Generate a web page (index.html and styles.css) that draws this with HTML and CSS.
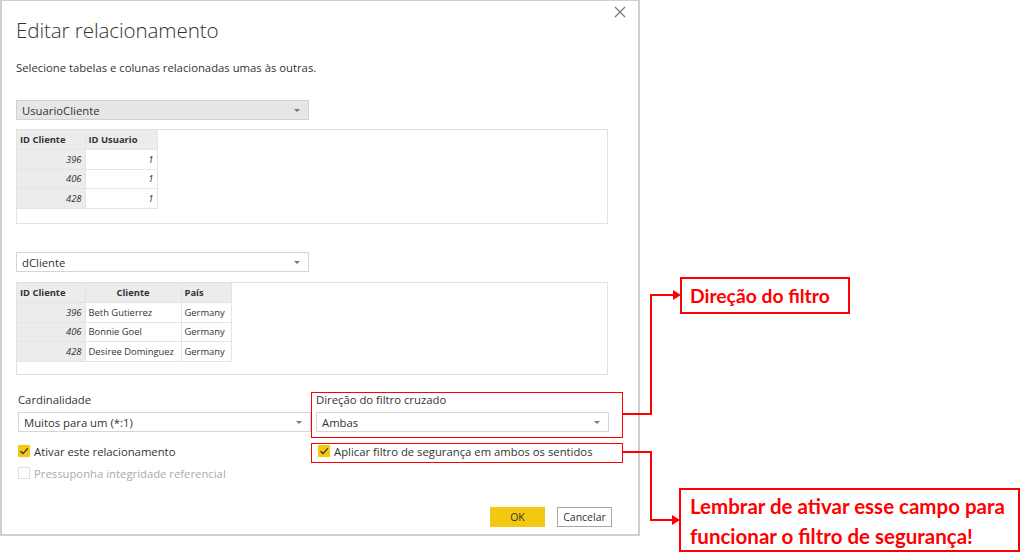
FILE: index.html
```html
<!DOCTYPE html>
<html lang="pt">
<head>
<meta charset="utf-8">
<title>Editar relacionamento</title>
<link rel="stylesheet" href="styles.css">
</head>
<body>
<div class="page">
  <div class="dialog">
    <div class="close">
      <svg width="12" height="12" viewBox="0 0 12 12"><path d="M1 1L11 11M11 1L1 11" stroke="#777" stroke-width="1.2"/></svg>
    </div>
    <h1 class="title">Editar relacionamento</h1>
    <p class="subtitle">Selecione tabelas e colunas relacionadas umas às outras.</p>

    <div class="select select-gray"><span>UsuarioCliente</span><span class="caret"></span></div>
    <div class="grid-box box1">
      <table class="tbl t1">
        <colgroup><col class="w68"><col class="w72"></colgroup>
        <tr><th>ID Cliente</th><th>ID Usuario</th></tr>
        <tr><td class="key">396</td><td class="num">1</td></tr>
        <tr><td class="key">406</td><td class="num">1</td></tr>
        <tr><td class="key">428</td><td class="num">1</td></tr>
      </table>
    </div>

    <div class="select select-white sel2"><span>dCliente</span><span class="caret"></span></div>
    <div class="grid-box box2">
      <table class="tbl t2">
        <colgroup><col class="w68"><col class="w96"><col class="w50"></colgroup>
        <tr><th>ID Cliente</th><th class="center">Cliente</th><th>País</th></tr>
        <tr><td class="key">396</td><td class="txt">Beth Gutierrez</td><td class="txt">Germany</td></tr>
        <tr><td class="key">406</td><td class="txt">Bonnie Goel</td><td class="txt">Germany</td></tr>
        <tr><td class="key">428</td><td class="txt">Desiree Dominguez</td><td class="txt">Germany</td></tr>
      </table>
    </div>

    <div class="options">
      <div class="col col-left">
        <div class="label">Cardinalidade</div>
        <div class="select select-white"><span>Muitos para um (*:1)</span><span class="caret"></span></div>
      </div>
      <div class="col col-right">
        <div class="label">Direção do filtro cruzado</div>
        <div class="select select-white"><span>Ambas</span><span class="caret"></span></div>
      </div>
    </div>

    <div class="checks">
      <div class="col col-left">
        <div class="check-row"><span class="cb on"><svg width="12" height="12" viewBox="0 0 12 12"><path d="M2.5 6.2L5 8.6L9.8 3.4" fill="none" stroke="#333" stroke-width="1.4"/></svg></span><span>Ativar este relacionamento</span></div>
        <div class="check-row disabled"><span class="cb"></span><span>Pressuponha integridade referencial</span></div>
      </div>
      <div class="col col-right2">
        <div class="check-row"><span class="cb on"><svg width="12" height="12" viewBox="0 0 12 12"><path d="M2.5 6.2L5 8.6L9.8 3.4" fill="none" stroke="#333" stroke-width="1.4"/></svg></span><span>Aplicar filtro de segurança em ambos os sentidos</span></div>
      </div>
    </div>

    <div class="buttons">
      <button class="btn ok">OK</button>
      <button class="btn cancel">Cancelar</button>
    </div>
  </div>

  <div class="hl hl1"></div>
  <div class="hl hl2"></div>

  <svg class="connectors" width="1024" height="560" viewBox="0 0 1024 560">
    <polyline points="622,414 651,414 651,295 674,295" fill="none" stroke="#ff0000" stroke-width="2"/>
    <polygon points="673,290 681,295 673,300" fill="#ff0000"/>
    <polyline points="622,452 651,452 651,520 673,520" fill="none" stroke="#ff0000" stroke-width="2"/>
    <polygon points="672,515 680,520 672,525" fill="#ff0000"/>
  </svg>

  <div class="note note1">Direção do filtro</div>
  <div class="note note2">Lembrar de ativar esse campo para<br>funcionar o filtro de segurança!</div>
</div>
</body>
</html>
```

FILE: styles.css
```css
* { box-sizing: border-box; }
html, body { margin: 0; padding: 0; background: #fff; }
body { font-family: "Open Sans", "Noto Sans", sans-serif; color: #333; }

.page { position: relative; width: 1024px; height: 560px; overflow: hidden; }

.dialog {
  position: relative;
  width: 640px;
  height: 536px;
  border: 2px solid #cfcfcf;
  border-top-width: 1px;
  padding: 0 0 0 14px;
  background: #fff;
}

.close { position: absolute; top: 5px; right: 12px; width: 12px; height: 12px; line-height: 0; }

.title {
  margin: 0;
  padding-top: 14px;
  font-size: 20.6px;
  font-weight: 300;
  line-height: 30px;
  color: #333;
  letter-spacing: -0.1px;
}

.subtitle {
  margin: 15px 0 0;
  font-size: 11.3px;
  line-height: 16px;
  color: #333;
}

.select {
  display: flex;
  align-items: center;
  justify-content: space-between;
  width: 293px;
  height: 20px;
  padding: 0 8px 0 5px;
  font-size: 11.3px;
  color: #333;
  border: 1px solid #d6d6d6;
}
.select-gray { margin-top: 24px; background: #e6e6e6; border-color: #d2d2d2; }
.select-white { background: #fff; }
.sel2 { margin-top: 28px; }
.caret {
  width: 0; height: 0;
  border-left: 3px solid transparent;
  border-right: 3px solid transparent;
  border-top: 3px solid #777;
}

.grid-box {
  width: 592px;
  margin-top: 9px;
  border: 1px solid #e2e2e2;
  background: #fff;
}
.box1 { height: 95px; }
.box2 { height: 93px; margin-top: 10px; }

.tbl {
  border-collapse: collapse;
  table-layout: fixed;
  font-size: 9.4px;
  color: #333;
}
.t1 { width: 140px; }
.t2 { width: 214px; }
.w68 { width: 68px; }
.w72 { width: 72px; }
.w96 { width: 96px; }
.w50 { width: 50px; }
.tbl th, .tbl td {
  height: 19.5px;
  padding: 0 3px;
  border: 1px solid #e4e4e4;
  white-space: nowrap;
  overflow: hidden;
}
.tbl tr:first-child th { border-top: none; }
.tbl th:first-child, .tbl td:first-child { border-left: none; }
.tbl th {
  background: #ececec;
  font-weight: 700;
  text-align: left;
}
.tbl th.center { text-align: center; }
.tbl td.key { background: #ececec; text-align: right; font-style: italic; }
.tbl td.num { text-align: right; font-style: italic; background: #fff; }
.tbl td.txt { background: #fff; }

.options { display: flex; margin-top: 17px; }
.col-left { width: 300px; padding-left: 2px; }
.col-right { padding-left: 0; }
.label { font-size: 11.3px; line-height: 16px; height: 16px; margin-bottom: 4px; color: #333; }

.checks { display: flex; margin-top: 12px; }
.col-right2 { padding-left: 2px; }
.check-row {
  display: flex;
  align-items: center;
  height: 14px;
  font-size: 11.3px;
  color: #333;
  margin-bottom: 8px;
}
.check-row .cb {
  width: 12px; height: 12px;
  margin-right: 4px;
  border: 1px solid #d9d9d9;
  display: inline-flex;
  line-height: 0;
  background: #fff;
}
.check-row .cb.on { background: #f2c811; border-color: #f2c811; }
.check-row .cb svg { margin: -1px; }
.check-row.disabled { color: #aaa; }
.check-row.disabled .cb { border-color: #e0e0e0; }

.buttons {
  display: flex;
  gap: 12px;
  margin-top: 19px;
  padding-left: 474px;
}
.btn {
  width: 55px;
  height: 20px;
  padding: 0;
  font-family: "Open Sans", "Noto Sans", sans-serif;
  font-size: 10.5px;
  color: #333;
  cursor: pointer;
}
.btn.ok { background: #f2c811; border: 1px solid #f2c811; }
.btn.cancel { background: #fff; border: 1px solid #a8a8a8; }

.hl { position: absolute; border: 1px solid #ff0000; }
.hl1 { left: 311px; top: 392px; width: 312px; height: 46px; }
.hl2 { left: 311px; top: 443px; width: 312px; height: 20px; }

.connectors { position: absolute; left: 0; top: 0; pointer-events: none; }

.note {
  position: absolute;
  border: 2px solid #ff0000;
  color: #ff0000;
  font-family: "Lato", "Liberation Sans", sans-serif;
  font-weight: 700;
  background: #fff;
  white-space: nowrap;
}
.note1 {
  left: 680px; top: 277px; width: 170px; height: 37px;
  font-size: 19.3px; line-height: 33px; padding-left: 8px;
}
.note2 {
  left: 679px; top: 488px; width: 341px; height: 64px;
  font-size: 20.5px; line-height: 30px; padding: 1px 0 0 9px;
}
```
